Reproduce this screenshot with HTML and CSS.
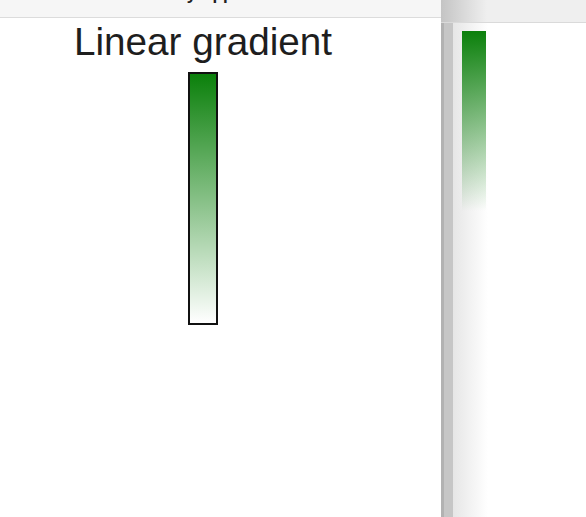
FILE: index.html
```html
<!DOCTYPE html>
<html lang="en">
<head>
    <meta charset="UTF-8">
    <meta name="viewport" content="width=device-width, initial-scale=1.0">
    <title>Gradients</title>
    <link rel="stylesheet" href="styles.css">
</head>
<body>
    <div class="window">
        <!-- rendered view -->
        <div class="pane-left">
            <div class="titlebar"><span class="titlebar-text">My App</span></div>
            <div class="demo">
                <h1 class="demo-title">Linear gradient</h1>
                <div class="swatch"></div>
            </div>
        </div>

        <!-- raw preview -->
        <div class="pane-right">
            <div class="toolbar"></div>
            <div class="preview-row">
                <div class="splitter"></div>
                <div class="preview">
                    <div class="swatch-bare"></div>
                </div>
            </div>
        </div>
    </div>
</body>
</html>
```

FILE: styles.css
```css
html, body {
    height: 100%;
}

body {
    margin: 0;
    font-family: "Liberation Sans", Arial, sans-serif;
    background: #fff;
}

.window {
    display: flex;
    height: 100vh;
    overflow: hidden;
}

.pane-left {
    width: 441px;
    background: #fff;
}

.titlebar {
    height: 17px;
    padding-right: 35px;
    background: #f6f6f6;
    border-bottom: 1px solid #dcdcdc;
    text-align: center;
    overflow: hidden;
}

.titlebar-text {
    display: block;
    margin-top: -15px;
    font-size: 17px;
    font-weight: bold;
    line-height: 20px;
    color: #222;
}

.demo {
    width: 406px;
    display: flex;
    flex-direction: column;
    align-items: center;
}

.demo-title {
    margin: 2px 0 0;
    font-size: 38.7px;
    font-weight: normal;
    line-height: normal;
    color: #1e1e1e;
}

.swatch {
    margin-top: 8px;
    width: 26px;
    height: 249px;
    border: 2px solid #111;
    background: linear-gradient(#0b800b, #fff);
}

.pane-right {
    flex: 1;
    display: flex;
    flex-direction: column;
}

.toolbar {
    height: 22px;
    background: linear-gradient(to right, #c4c4c4, #efefef 46px);
    border-bottom: 1px solid #dadada;
}

.preview-row {
    flex: 1;
    display: flex;
}

.splitter {
    width: 9px;
    background: #c6c6c6;
    border-left: 3px solid #b2b2b2;
}

.preview {
    flex: 1;
    padding: 8px 9px;
    background: linear-gradient(to right, #e6e6e6, #fff 35px);
}

.swatch-bare {
    width: 24px;
    height: 180px;
    background: linear-gradient(#0b800b, rgba(255, 255, 255, 0));
}
```
